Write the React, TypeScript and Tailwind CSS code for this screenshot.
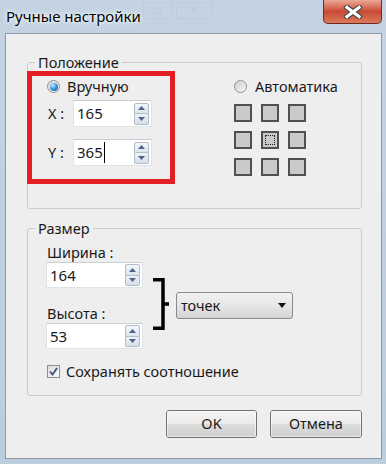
import React from "react";

const FONT = { fontFamily: '"Noto Sans", "Open Sans", "Liberation Sans", sans-serif' };

function Spinner() {
  return (
    <div className="flex flex-col w-[15px] h-[22px] mr-[2px] gap-0">
      <div className="flex-1 flex items-center justify-center border border-[#b4bcc8] rounded-t-[2px] bg-gradient-to-b from-[#f4f7fb] to-[#dbe4ee]">
        <svg width="7" height="4" viewBox="0 0 7 4"><polygon points="0,4 7,4 3.5,0" fill="#4e6288" /></svg>
      </div>
      <div className="flex-1 flex items-center justify-center border border-t-0 border-[#b4bcc8] rounded-b-[2px] bg-gradient-to-b from-[#eef2f7] to-[#d5dfea]">
        <svg width="7" height="4" viewBox="0 0 7 4"><polygon points="0,0 7,0 3.5,4" fill="#4e6288" /></svg>
      </div>
    </div>
  );
}

function NumInput({ value, w, h, caret }: { value: string; w: string; h: string; caret?: boolean }) {
  return (
    <div className={`${w} ${h} flex items-center bg-white border border-[#dfe3e8] border-t-[#c9ced5]`}>
      <div className="flex-1 flex items-center pl-[3px] text-[15px] text-[#1a1a1a] leading-none">
        <span>{value}</span>
        {caret && <span className="w-px h-[21px] bg-black ml-px" />}
      </div>
      <Spinner />
    </div>
  );
}

function Radio({ checked }: { checked?: boolean }) {
  return (
    <div className="w-[13px] h-[13px] rounded-full border border-[#8e8f8f] bg-gradient-to-br from-[#d9d9d9] to-[#f8f8f8] flex items-center justify-center">
      {checked ? (
        <div className="w-[8px] h-[8px] rounded-full bg-[radial-gradient(circle_at_35%_30%,#c8ecff_0%,#3c9be0_45%,#0f4f96_100%)]" />
      ) : (
        <div className="w-[9px] h-[9px] rounded-full bg-gradient-to-br from-[#cfcfcf] to-[#f4f4f4]" />
      )}
    </div>
  );
}

function GridSq({ focus }: { focus?: boolean }) {
  return (
    <div className="w-[18px] h-[18px] border-2 border-[#505050] bg-[#cacaca] flex items-center justify-center">
      {focus && <div className="w-[10px] h-[10px] border border-dotted border-[#222]" />}
    </div>
  );
}

function Btn({ label, w }: { label: string; w: string }) {
  return (
    <div className={`${w} h-[28px] rounded-[3px] border border-[#707070] flex flex-col overflow-hidden relative`}>
      <div className="h-1/2 bg-gradient-to-b from-[#f3f3f3] to-[#ebebeb]" />
      <div className="h-1/2 bg-gradient-to-b from-[#dddddd] to-[#cfcfcf]" />
      <div className="absolute inset-0 flex items-center justify-center text-[14.5px] text-[#1a1a1a] border border-[#fcfcfc]/60 rounded-[2px]">
        {label}
      </div>
    </div>
  );
}

export default function App() {
  return (
    <div className="w-[386px] h-[464px] overflow-hidden bg-gradient-to-b from-[#c4d3e2] to-[#bccddd] flex flex-col" style={FONT}>
      {/* title bar */}
      <div className="h-[33px] flex items-start">
        <div className="pl-[6px] pt-[6px] text-[15px] text-black leading-[20px] [text-shadow:0_0_6px_#ffffff,0_0_3px_#ffffff]">
          Ручные настройки
        </div>
        <div className="flex items-start gap-[3px] ml-[2px] pt-[2px] opacity-40">
          <div className="w-[30px] h-[17px] border border-[#b5c4d3] rounded-[2px] flex items-center justify-center">
            <div className="w-[7px] h-[6px] border border-[#b5c4d3]" />
          </div>
          <div className="w-[37px] h-[17px] border border-[#b5c4d3] rounded-[2px] flex items-center justify-center text-[#b5c4d3] text-[13px] leading-none">
            ✕
          </div>
        </div>
        <div className="ml-auto mr-[4px] w-[59px] h-[24px] rounded-b-[5px] border border-[#6e2a20] border-t-0 bg-gradient-to-b from-[#eaa898] via-[#c84a35] to-[#da7a5c] flex items-center justify-center">
          <svg width="20" height="14" viewBox="0 0 20 14">
            <path d="M4 2.5 L16 11.5 M16 2.5 L4 11.5" stroke="#4a4a4a" strokeWidth="5.5" strokeLinecap="square" />
            <path d="M4 2.5 L16 11.5 M16 2.5 L4 11.5" stroke="#ffffff" strokeWidth="3.2" strokeLinecap="square" />
          </svg>
        </div>
      </div>

      {/* client area */}
      <div className="ml-[5px] mr-[4px] h-[426px] border border-[#8b99a8] bg-[#eeeeee] pl-[21px] text-[#1a1a1a]">
        {/* Положение */}
        <fieldset className="mt-[19px] w-[335px] h-[156px] border border-[#c7ccd2] rounded-[3px]">
          <legend className="ml-[7px] px-[3px] text-[14.5px] leading-[18px]">Положение</legend>
          <div className="flex items-start">
            <div className="-ml-px w-[148px] h-[113px] border-[5px] border-[#e31e25] flex flex-col">
              <div className="flex items-center h-[13px] mt-[4px] pl-[15px] gap-[7px] text-[14.5px] leading-none">
                <Radio checked />
                <span>Вручную</span>
              </div>
              <div className="flex items-center mt-[7px] h-[27px] pl-[16px] text-[14.5px]">
                <span className="w-[25px]">X :</span>
                <NumInput value="165" w="w-[79px]" h="h-[27px]" />
              </div>
              <div className="flex items-center mt-[12px] h-[27px] pl-[16px] text-[14.5px]">
                <span className="w-[25px]">Y :</span>
                <NumInput value="365" w="w-[79px]" h="h-[27px]" caret />
              </div>
            </div>
            <div className="ml-[59px] flex flex-col">
              <div className="flex items-center h-[13px] mt-[9px] gap-[8px] text-[14.5px] leading-none">
                <Radio />
                <span>Автоматика</span>
              </div>
              <div className="grid grid-cols-3 gap-[9px] w-[72px] mt-[11px]">
                <GridSq />
                <GridSq />
                <GridSq />
                <GridSq />
                <GridSq focus />
                <GridSq />
                <GridSq />
                <GridSq />
                <GridSq />
              </div>
            </div>
          </div>
        </fieldset>

        {/* Размер */}
        <fieldset className="mt-[10px] w-[335px] h-[177px] border border-[#c7ccd2] rounded-[3px]">
          <legend className="ml-[7px] px-[3px] text-[14.5px] leading-[18px]">Размер</legend>
          <div className="flex items-start pl-[18px] mt-[6px]">
            <div className="flex flex-col w-[97px]">
              <div className="text-[14.5px] leading-[18px] pl-px">Ширина :</div>
              <div className="mt-[1px]">
                <NumInput value="164" w="w-[97px]" h="h-[26px]" />
              </div>
              <div className="text-[14.5px] leading-[18px] pl-px mt-[16px]">Высота :</div>
              <div className="mt-[1px]">
                <NumInput value="53" w="w-[97px]" h="h-[26px]" />
              </div>
            </div>
            <svg className="ml-[10px] mt-[35px]" width="17" height="52" viewBox="0 0 17 52">
              <path d="M0 1.75 H10 V50.25 H0 M10 26 H16" stroke="#000" strokeWidth="3.5" fill="none" />
            </svg>
            <div className="ml-[6px] mt-[49px] w-[117px] h-[27px] rounded-[3px] border border-[#8a8a8a] bg-gradient-to-b from-[#f2f2f2] via-[#e6e6e6] to-[#d4d4d4] flex items-center pl-[4px] pr-[6px]">
              <span className="flex-1 text-[14.5px] leading-none">точек</span>
              <svg width="8" height="5" viewBox="0 0 8 5"><polygon points="0,0 8,0 4,5" fill="#111" /></svg>
            </div>
          </div>
          <div className="flex items-center gap-[6px] pl-[19px] mt-[15px] text-[14.5px] leading-none">
            <div className="w-[13px] h-[13px] border border-[#8e8f8f] bg-gradient-to-br from-[#dcdcdc] to-[#f9f9f9] flex items-center justify-center">
              <svg width="9" height="9" viewBox="0 0 9 9">
                <path d="M1 4.5 L3.5 7.5 L8 1" stroke="#3d4f7d" strokeWidth="1.8" fill="none" />
              </svg>
            </div>
            <span>Сохранять соотношение</span>
          </div>
        </fieldset>

        <div className="flex justify-end gap-[13px] w-[335px] mt-[14px]">
          <Btn label="OK" w="w-[91px]" />
          <Btn label="Отмена" w="w-[92px]" />
        </div>
      </div>
    </div>
  );
}
